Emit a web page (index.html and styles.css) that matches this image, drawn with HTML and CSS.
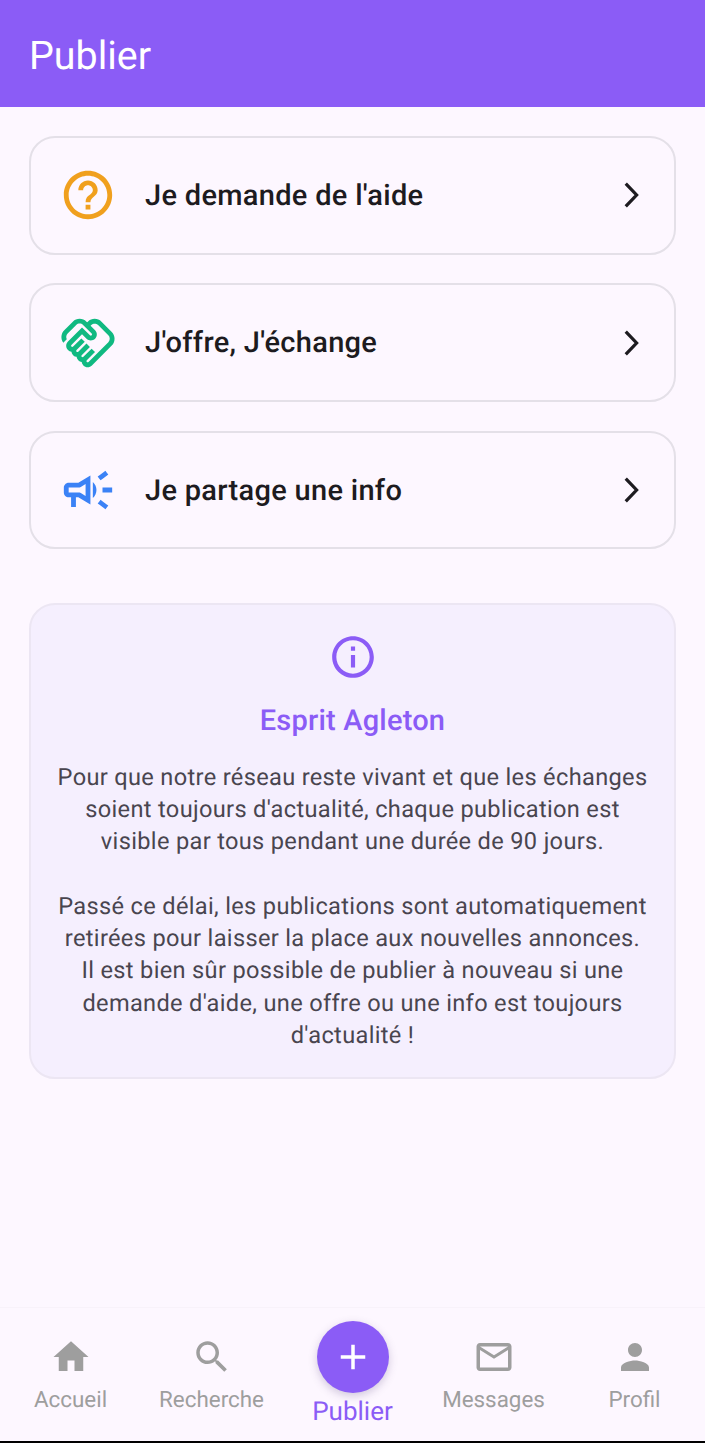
FILE: index.html

```html
<!DOCTYPE html>
<html lang="fr">
<head>
  <meta charset="UTF-8">
  <meta name="viewport" content="width=device-width, initial-scale=1.0">
  <title>Publier</title>
  <link rel="stylesheet" href="styles.css">
</head>
<body>
  <header class="appbar">Publier</header>

  <main class="content">
    <a class="option">
      <svg class="option-icon orange" viewBox="0 0 24 24"><path d="M11 18h2v-2h-2v2zm1-16C6.48 2 2 6.48 2 12s4.48 10 10 10 10-4.48 10-10S17.52 2 12 2zm0 18c-4.41 0-8-3.59-8-8s3.59-8 8-8 8 3.59 8 8-3.59 8-8 8zm0-14c-2.21 0-4 1.79-4 4h2c0-1.1.9-2 2-2s2 .9 2 2c0 2-3 1.75-3 5h2c0-2.25 3-2.5 3-5 0-2.21-1.79-4-4-4z"/></svg>
      <span class="option-label">Je demande de l'aide</span>
      <svg class="chevron" viewBox="0 0 24 24"><path d="M9 5.5l6.2 6.5L9 18.5"/></svg>
    </a>
    <a class="option">
      <svg class="option-icon green" viewBox="0 0 24 24"><path d="M12.22 19.85c-.18.18-.5.21-.71 0-.18-.18-.21-.5 0-.71l3.39-3.39-1.41-1.41-3.39 3.39c-.19.2-.51.19-.71 0-.21-.21-.18-.53 0-.71l3.39-3.39-1.41-1.41-3.39 3.39c-.18.18-.5.21-.71 0-.19-.19-.19-.51 0-.71l3.39-3.39-1.42-1.41-3.39 3.39c-.18.18-.5.21-.71 0-.19-.2-.19-.51 0-.71L9.52 8.4l1.87 1.86c.95.95 2.59.94 3.54 0 .98-.98.98-2.56 0-3.54l-1.86-1.86.28-.28c.78-.78 2.05-.78 2.83 0l4.24 4.24c.78.78.78 2.05 0 2.83l-8.2 8.2zm9.61-6.78c1.56-1.56 1.56-4.09 0-5.66l-4.24-4.24c-1.56-1.56-4.09-1.56-5.66 0l-.28.28-.28-.28c-1.56-1.56-4.09-1.56-5.66 0L2.17 6.71C.76 8.12.63 10.32 1.77 11.88l1.45-1.45c-.39-.75-.26-1.7.37-2.33l3.54-3.54c.78-.78 2.05-.78 2.83 0l3.56 3.56c.18.18.21.5 0 .71-.21.21-.53.18-.71 0L9.52 5.57l-5.8 5.79c-.98.97-.98 2.56 0 3.54.39.39.89.63 1.42.7.07.52.3 1.02.7 1.42.4.4.9.63 1.42.7.07.52.3 1.02.7 1.42.4.4.9.63 1.42.7.07.54.31 1.03.7 1.42.47.47 1.1.73 1.77.73.67 0 1.3-.26 1.77-.73l8.21-8.19z"/></svg>
      <span class="option-label">J'offre, J'échange</span>
      <svg class="chevron" viewBox="0 0 24 24"><path d="M9 5.5l6.2 6.5L9 18.5"/></svg>
    </a>
    <a class="option">
      <svg class="option-icon blue" viewBox="0 0 24 24"><path d="M18 11v2h4v-2h-4zm-2 6.61c.96.71 2.21 1.65 3.2 2.39.4-.53.8-1.07 1.2-1.6-.99-.74-2.24-1.68-3.2-2.4-.4.54-.8 1.08-1.2 1.61zM20.4 5.6c-.4-.53-.8-1.07-1.2-1.6-.99.74-2.24 1.68-3.2 2.4.4.53.8 1.07 1.2 1.6.96-.72 2.21-1.65 3.2-2.4zM4 9c-1.1 0-2 .9-2 2v2c0 1.1.9 2 2 2h1v4h2v-4h1l5 3V6L8 9H4zm5.03 1.71L11 9.53v4.94l-1.97-1.18-.48-.29H4v-2h4.55l.48-.29zM15.5 12c0-1.33-.58-2.53-1.5-3.35v6.69c.92-.81 1.5-2.01 1.5-3.34z"/></svg>
      <span class="option-label">Je partage une info</span>
      <svg class="chevron" viewBox="0 0 24 24"><path d="M9 5.5l6.2 6.5L9 18.5"/></svg>
    </a>

    <section class="info">
      <svg class="info-icon" viewBox="0 0 24 24"><path d="M11 7h2v2h-2zm0 4h2v6h-2zm1-9C6.48 2 2 6.48 2 12s4.48 10 10 10 10-4.48 10-10S17.52 2 12 2zm0 18c-4.41 0-8-3.59-8-8s3.59-8 8-8 8 3.59 8 8-3.59 8-8 8z"/></svg>
      <h2 class="info-title">Esprit Agleton</h2>
      <p class="info-text">Pour que notre réseau reste vivant et que les échanges<br>soient toujours d'actualité, chaque publication est<br>visible par tous pendant une durée de 90 jours.<br><br>Passé ce délai, les publications sont automatiquement<br>retirées pour laisser la place aux nouvelles annonces.<br>Il est bien sûr possible de publier à nouveau si une<br>demande d'aide, une offre ou une info est toujours<br>d'actualité !</p>
    </section>
  </main>

  <nav class="bottom-nav">
    <a class="nav-item">
      <svg class="nav-icon" viewBox="0 0 24 24"><path d="M10 20v-6h4v6h5v-8h3L12 3 2 12h3v8z"/></svg>
      <span>Accueil</span>
    </a>
    <a class="nav-item">
      <svg class="nav-icon" viewBox="0 0 24 24"><path d="M15.5 14h-.79l-.28-.27C15.41 12.59 16 11.11 16 9.5 16 5.91 13.09 3 9.5 3S3 5.91 3 9.5 5.91 16 9.5 16c1.61 0 3.09-.59 4.23-1.57l.27.28v.79l5 4.99L20.49 19l-4.99-5zm-6 0C7.01 14 5 11.99 5 9.5S7.01 5 9.5 5 14 7.01 14 9.5 11.99 14 9.5 14z"/></svg>
      <span>Recherche</span>
    </a>
    <a class="nav-item active">
      <span class="fab"><svg viewBox="0 0 24 24"><path d="M19 13h-6v6h-2v-6H5v-2h6V5h2v6h6v2z"/></svg></span>
      <span>Publier</span>
    </a>
    <a class="nav-item">
      <svg class="nav-icon" viewBox="0 0 24 24"><path d="M20 4H4c-1.1 0-1.99.9-1.99 2L2 18c0 1.1.9 2 2 2h16c1.1 0 2-.9 2-2V6c0-1.1-.9-2-2-2zm0 14H4V8l8 5 8-5v10zm-8-7L4 6h16l-8 5z"/></svg>
      <span>Messages</span>
    </a>
    <a class="nav-item">
      <svg class="nav-icon" viewBox="0 0 24 24"><path d="M12 12c2.21 0 4-1.79 4-4s-1.79-4-4-4-4 1.79-4 4 1.79 4 4 4zm0 2c-2.67 0-8 1.34-8 4v2h16v-2c0-2.66-5.33-4-8-4z"/></svg>
      <span>Profil</span>
    </a>
  </nav>
</body>
</html>
```

FILE: styles.css

```css
* {
  box-sizing: border-box;
}
body {
  margin: 0;
  height: 1443px;
  display: flex;
  flex-direction: column;
  font-family: Roboto, sans-serif;
  text-rendering: geometricPrecision;
  background-color: #fdf7ff;
  overflow: hidden;
}
.appbar {
  height: 107px;
  padding: 3px 29px 0;
  display: flex;
  align-items: center;
  background-color: #8b5cf6;
  color: white;
  font-size: 39.4px;
}
.content {
  flex: 1;
  padding: 29px 29px 0;
  display: flex;
  flex-direction: column;
  gap: 28.8px;
}
.option {
  height: 118.5px;
  padding: 0 22px 0 28px;
  display: flex;
  align-items: center;
  border: 2px solid #e4e0e8;
  border-radius: 26px;
}
.option-icon {
  width: 58px;
  height: 58px;
  margin-right: 28px;
}
.orange { fill: #f0a01e; }
.green { fill: #10b981; }
.blue { fill: #3b82f6; }
.option-label {
  flex: 1;
  padding-top: 1.5px;
  font-size: 29px;
  font-weight: 500;
  letter-spacing: 0.3px;
  color: #1d1b20;
}
.chevron {
  width: 42px;
  height: 42px;
  fill: none;
  stroke: #1d1b20;
  stroke-width: 1.85;
}
.info {
  margin-top: 25.1px;
  height: 476px;
  padding: 27px 20px 0;
  display: flex;
  flex-direction: column;
  align-items: center;
  background-color: #f5effe;
  border: 2px solid #ece6f3;
  border-radius: 26px;
}
.info-icon {
  width: 50px;
  height: 50px;
  fill: #8b5cf6;
}
.info-title {
  margin: 22px 0 0;
  font-size: 29px;
  font-weight: 500;
  letter-spacing: 0.2px;
  color: #8b5cf6;
}
.info-text {
  margin: 23px 0 0;
  font-size: 23.6px;
  line-height: 32.25px;
  letter-spacing: 0.33px;
  text-align: center;
  color: #49454f;
}
.bottom-nav {
  height: 136px;
  display: flex;
  border-top: 1px solid #f8f2fa;
  border-bottom: 2px solid #000;
}
.nav-item {
  flex: 1;
  display: flex;
  flex-direction: column;
  align-items: center;
  padding-top: 28px;
  font-size: 22.4px;
  color: #9e9e9e;
}
.nav-icon {
  width: 42px;
  height: 42px;
  margin-bottom: 9px;
  fill: #9e9e9e;
}
.nav-item.active {
  padding-top: 13px;
  font-size: 26px;
  color: #8b5cf6;
}
.fab {
  width: 72px;
  height: 72px;
  margin-bottom: 4px;
  display: flex;
  align-items: center;
  justify-content: center;
  border-radius: 50%;
  background-color: #8b5cf6;
  box-shadow: 0 3px 8px rgba(80, 60, 120, 0.25);
}
.fab svg {
  width: 42px;
  height: 42px;
  fill: white;
}
```
